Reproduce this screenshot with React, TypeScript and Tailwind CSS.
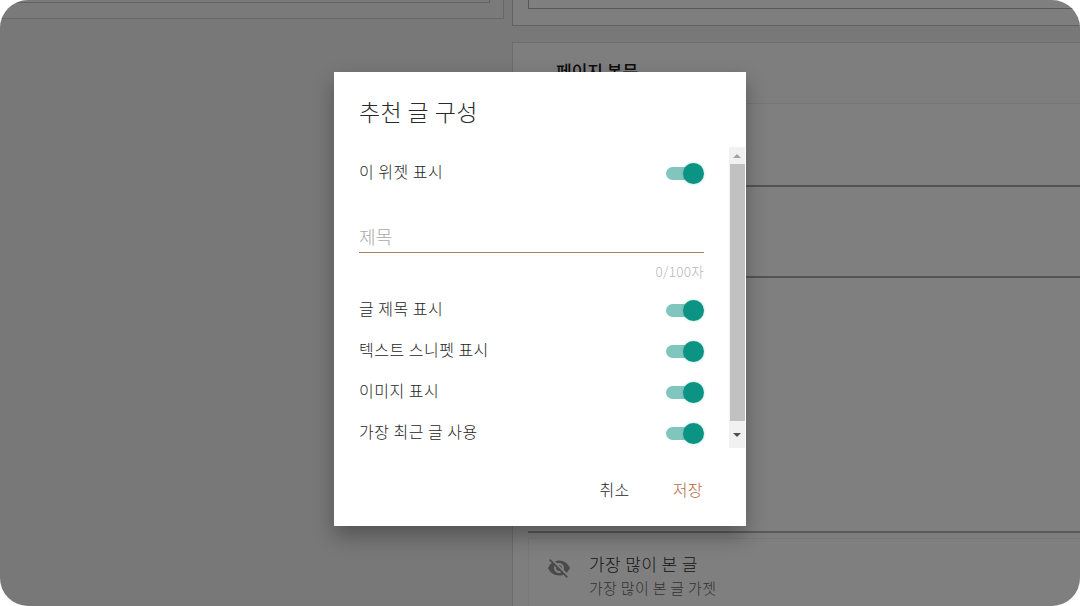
import { MdVisibilityOff } from "react-icons/md";

const font = { fontFamily: '"Noto Sans CJK KR", "Noto Sans", sans-serif' };

const Toggle = () => (
  <div className="relative h-[13px] w-[38px]">
    <div className="h-[13px] w-[34px] rounded-full bg-[#80c6be]" />
    <div className="absolute right-0 top-[-4px] h-[21px] w-[21px] rounded-full bg-[#0b9484] shadow-[0_0_3px_rgba(0,150,136,0.35)]" />
  </div>
);

const Row = ({ label, className }: { label: string; className?: string }) => (
  <div className={`flex items-center justify-between ${className ?? ""}`}>
    <span className="-translate-y-[2px] text-[16px] font-light leading-[20px] tracking-[0.5px] text-[#262626]">{label}</span>
    <Toggle />
  </div>
);

const Background = () => (
  <div className="flex h-full">
    {/* left column */}
    <div className="w-[512px] shrink-0 pr-[8px]">
      <div className="h-[19px] border-b border-r border-[#cfcfcf] bg-[#f4f4f4]">
        <div className="h-[3px] w-[490px] border-b border-r border-[#c4c4c4]" />
      </div>
    </div>
    {/* right column */}
    <div className="flex-1">
      <div className="h-[26px] border-b border-l border-[#c4c4c4] bg-[#fcfcfc] pl-[15px]">
        <div className="h-[9px] border-b border-l border-[#b0b0b0] bg-[#fff]" />
      </div>
      <div className="mt-[16px] h-[564px] border-l border-t border-[#d8d8d8] bg-[#fdfdfd] pl-[15px]">
        <div className="h-[60px] pl-[28px] pt-[18px] text-[17px] font-medium leading-[20px] text-[#1a1a1a]">페이지 본문</div>
        <div className="h-[84px] border-b-2 border-t border-b-[#a6a6a6] border-t-[#ececec] bg-[#ffffff]" />
        <div className="h-[91px] border-b-2 border-b-[#a6a6a6] bg-[#ffffff]" />
        <div className="h-[255px] border-b-2 border-b-[#b4b4b4] bg-[#ffffff]" />
        <div className="mt-[5px] flex h-[68px] items-start border-l border-t border-[#f0f0f0] bg-[#fff] pl-[18px] pt-[15px]">
          <MdVisibilityOff className="mt-[2px] h-[24px] w-[24px] text-[#959595]" />
          <div className="ml-[18px]">
            <div className="text-[17px] font-light leading-[20px] tracking-[0.4px] text-[#2e2e2e]">가장 많이 본 글</div>
            <div className="mt-[4px] text-[15px] font-light leading-[20px] tracking-[0.3px] text-[#666666]">가장 많이 본 글 가젯</div>
          </div>
        </div>
      </div>
    </div>
  </div>
);

const Scrollbar = () => (
  <div className="flex h-[301px] w-[16px] flex-col items-center bg-[#f1f1f1]">
    <div className="flex h-[17px] w-full items-center justify-center">
      <div className="h-0 w-0 border-x-[4px] border-b-[4px] border-x-transparent border-b-[#a3a3a3]" />
    </div>
    <div className="h-[257px] w-[15px] bg-[#c1c1c1]" />
    <div className="flex h-[27px] w-full items-center justify-center">
      <div className="h-0 w-0 border-x-[4px] border-t-[4px] border-x-transparent border-t-[#505050]" />
    </div>
  </div>
);

export default function App() {
  return (
    <div className="h-[606px] w-[1080px] overflow-hidden bg-white" style={font}>
      <div className="relative h-[606px] overflow-hidden rounded-[28px] bg-[#f0f0f0]">
        <Background />
        {/* overlay and dialog */}
        <div className="absolute inset-0 flex justify-center bg-black/50 pt-[72px]">
          <div className="h-[454px] w-[412px] bg-white shadow-[0_10px_20px_rgba(0,0,0,0.3)]">
            <div className="pl-[25px] pt-[24px] text-[23px] font-light leading-[30px] tracking-[0.4px] text-[#2a2a2a]">추천 글 구성</div>
            <div className="mt-[21px] flex">
              <div className="h-[301px] w-[395px] pl-[25px] pr-[25px]">
                <Row label="이 위젯 표시" className="mt-[16px]" />
                <div className="mt-[43px] h-[27px] border-b border-[#a5835a] text-[18px] font-light leading-[22px] tracking-[0.2px] text-[#a8a8a8]">
                  <span className="block -translate-y-px">제목</span>
                </div>
                <div className="mt-[9px] text-right text-[13.5px] font-light leading-[18px] tracking-[0.3px] text-[#b8b8b8]">0/100자</div>
                <Row label="글 제목 표시" className="mt-[20px]" />
                <Row label="텍스트 스니펫 표시" className="mt-[21px]" />
                <Row label="이미지 표시" className="mt-[21px]" />
                <Row label="가장 최근 글 사용" className="mt-[21px]" />
              </div>
              <Scrollbar />
            </div>
            <div className="mt-[30px] flex justify-end pr-[43px] text-[16px] font-light leading-[22px] tracking-[0.4px]">
              <span className="text-[#262626]">취소</span>
              <span className="ml-[43px] text-[#b5693c]">저장</span>
            </div>
          </div>
        </div>
      </div>
    </div>
  );
}
